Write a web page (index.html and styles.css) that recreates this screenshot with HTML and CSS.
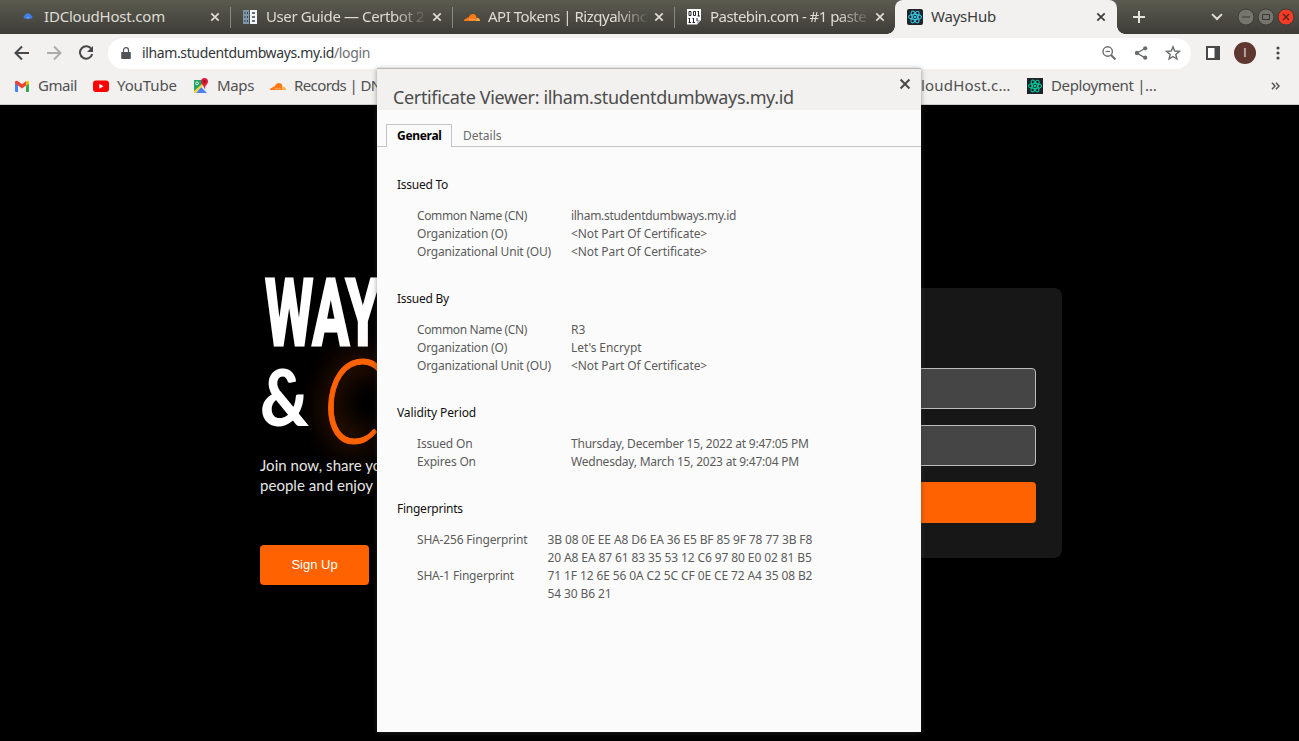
FILE: index.html
```
<!DOCTYPE html>
<html lang="en">
<head>
<meta charset="utf-8">
<title>WaysHub</title>
<link rel="stylesheet" href="styles.css">
</head>
<body>
<svg class="defs" width="0" height="0">
  <symbol id="x" viewBox="0 0 10 10"><path d="M1.3 1.3 8.7 8.7M8.7 1.3 1.3 8.7" fill="none" stroke="currentColor" stroke-width="1.7"/></symbol>
  <symbol id="cloud" viewBox="0 0 16 16"><path d="M0 12c.1-1.400 1-2.200 2.300-2.200.3-.9 1.200-1.400 2.200-1.100C5.300 6.400 7 4.900 8.900 4.900c1.800 0 3.300 1.100 3.500 2.900L12 12z" fill="#ff7a14"/><path d="M11.800 12l.9-3.200c1.900 0 3.200 1.200 3.300 3.200z" fill="#fbad41"/><path d="M5 10.700h6.200" stroke="#fcd9b8" stroke-width=".5"/></symbol>
  <symbol id="atom" viewBox="0 0 16 16"><g fill="none" stroke="currentColor" stroke-width="1.1"><ellipse cx="8" cy="8" rx="6.500" ry="2.500"/><ellipse cx="8" cy="8" rx="6.500" ry="2.500" transform="rotate(60 8 8)"/><ellipse cx="8" cy="8" rx="6.500" ry="2.500" transform="rotate(120 8 8)"/></g><circle cx="8" cy="8" r="1.300" fill="currentColor"/></symbol>
</svg>

<header class="tabs">
  <div class="tab">
    <svg class="ico" viewBox="0 0 16 16"><path d="M4.200 9.500a2 2 0 0 1 .3-3 3.700 3.700 0 0 1 6.700 0 2 2 0 0 1 .6 3z" fill="#3f7fea"/><path d="M6 9.500h4L8 7.500z" fill="#7ba9f5"/><path d="M1 12h14" stroke="#4d5155" stroke-width="1"/></svg>
    <span class="name">IDCloudHost.com</span><svg class="close"><use href="#x"/></svg>
  </div>
  <div class="tab">
    <svg class="ico" viewBox="0 0 16 16"><path d="M1 1h6v14H1z" fill="#7f97a8"/><path d="M8 1h7v14H8z" fill="#f2f4f5"/><path d="M2.500 3h1v2h-1zM2.500 7h1v2h-1zM2.500 11h1v2h-1zM5 3h1v2H5zM5 7h1v2H5zM5 11h1v2H5z" fill="#31475c"/><path d="M10 4h3M10 8h3M10 12h3" stroke="#31475c" stroke-width="1.700"/></svg>
    <span class="name fade guide">User Guide — Certbot 2</span><svg class="close"><use href="#x"/></svg>
  </div>
  <div class="tab">
    <svg class="ico"><use href="#cloud"/></svg>
    <span class="name fade api">API Tokens | Rizqyalvinc</span><svg class="close"><use href="#x"/></svg>
  </div>
  <div class="tab last">
    <svg class="ico" viewBox="0 0 16 16"><path d="M1 0h14v11l-4 4.500H1z" fill="#fff"/><path d="M15 11h-4v4.500z" fill="#aebbd0"/><g fill="none" stroke="#222"><path d="M3 2.500h2v4H3zM7.500 2.500h2v4h-2zM12.500 2v5M11.500 2.500h1M11.500 7h2.500M3.500 9v5M2.500 9.500h1M2.500 13.500H5M7.500 9v5M6.500 9.500h1M6.500 13.500H9M11 9v3"/></g></svg>
    <span class="name fade bin">Pastebin.com - #1 paste</span><svg class="close"><use href="#x"/></svg>
  </div>
  <div class="tab active">
    <svg class="ico react"><use href="#atom"/></svg>
    <span class="name">WaysHub</span><svg class="close"><use href="#x"/></svg>
  </div>
  <svg class="plus" viewBox="0 0 14 14"><path d="M7 1v12M1 7h12" stroke="#e6e4df" stroke-width="2"/></svg>
  <svg class="chev" viewBox="0 0 10 7"><path d="M.7 1 5 5.300 9.300 1" fill="none" stroke="#dfddd6" stroke-width="1.800"/></svg>
  <div class="winbtns">
    <svg viewBox="0 0 18 18"><circle cx="9" cy="9" r="8" fill="#75746d" stroke="#3c3b37"/><path d="M5 9h8" stroke="#393832"/></svg>
    <svg viewBox="0 0 18 18"><circle cx="9" cy="9" r="8" fill="#75746d" stroke="#3c3b37"/><path d="M5.500 6.500h7v5h-7z" fill="none" stroke="#393832"/></svg>
    <svg viewBox="0 0 18 18"><circle cx="9" cy="9" r="8" fill="#f43b25" stroke="#3c3b37"/><path d="M6 6l6 6M12 6l-6 6" stroke="#54221a" stroke-width="1.300"/></svg>
  </div>
</header>

<nav class="toolbar">
  <svg class="tool" viewBox="0 0 16 16"><path d="M15 8H2M8 1.500 1.500 8 8 14.500" fill="none" stroke="#47484a" stroke-width="2"/></svg>
  <svg class="tool" viewBox="0 0 16 16"><path d="M1 8h13M8 1.500 14.500 8 8 14.500" fill="none" stroke="#adacaa" stroke-width="2"/></svg>
  <svg class="tool" viewBox="0 0 16 16"><path d="M13.500 4.300A6.200 6.200 0 1 0 14.200 9" fill="none" stroke="#47484a" stroke-width="2"/><path d="M15 1v6H9z" fill="#47484a"/></svg>
  <div class="omnibox">
    <svg class="lock" viewBox="0 0 10 13"><path d="M1 5h8q.8 0 .8.8v5.400q0 .8-.8.8H1q-.8 0-.8-.8V5.800Q.2 5 1 5z" fill="#505357"/><path d="M2.500 5.500V3.200a2.500 2.500 0 0 1 5 0v2.300" fill="none" stroke="#505357" stroke-width="1.200"/></svg>
    <span class="url">ilham.studentdumbways.my.id<i>/login</i></span>
    <svg class="act" viewBox="0 0 16 16"><circle cx="6.700" cy="6.500" r="4.700" fill="none" stroke="#6a6c6f" stroke-width="1.400"/><path d="M10 10l4.500 4.500" stroke="#6a6c6f" stroke-width="1.900"/><path d="M4.500 6.500H9" stroke="#6a6c6f" stroke-width="1.200"/></svg>
    <svg class="act" viewBox="0 0 16 16"><path d="M12 3.500 4 8l8 4.800" fill="none" stroke="#6a6c6f" stroke-width="1.400"/><g fill="#6a6c6f"><circle cx="12.200" cy="3.300" r="2.100"/><circle cx="4" cy="8" r="2.200"/><circle cx="12.200" cy="12.700" r="2.100"/></g></svg>
    <svg class="act" viewBox="0 0 16 16"><path d="M8 1.800 9.700 6l4.700.4-3.600 3 1.100 4.600L8 11.500 4.100 14l1.100-4.600-3.600-3L6.300 6z" fill="none" stroke="#6a6c6f" stroke-width="1.400"/></svg>
  </div>
  <svg class="panel" viewBox="0 0 14 14"><path d="M1 1h12v12H1z" fill="#fff" stroke="#47484a" stroke-width="2"/><path d="M8.500 1H13v12H8.500z" fill="#47484a"/></svg>
  <span class="avatar">I</span>
  <svg class="dots" viewBox="0 0 4 14"><g fill="#47484a"><circle cx="2" cy="2" r="1.600"/><circle cx="2" cy="7" r="1.600"/><circle cx="2" cy="12" r="1.600"/></g></svg>
</nav>

<nav class="bookmarks">
  <div class="bm gmail"><svg class="ico" viewBox="0 0 16 16"><path d="M1 4h3v10H2q-1 0-1-1z" fill="#4285f4"/><path d="M12 4h3v9q0 1-1 1h-2z" fill="#34a853"/><path d="M1 3.500Q2.500 1.800 4.500 3.500L8 6.300l4-3v4.200L8 10.500 4 7.500 1 5.500z" fill="#ea4335"/><path d="M12 3.300q2-1.300 3 .5v2l-3 2z" fill="#fbbc04"/></svg><span>Gmail</span></div>
  <div class="bm youtube"><svg class="ico" viewBox="0 0 16 16"><rect y="2.500" width="16" height="11.500" rx="3" fill="#f00"/><path d="M6.300 5.800v5L10.500 8.300z" fill="#fff"/></svg><span>YouTube</span></div>
  <div class="bm maps"><svg class="ico" viewBox="0 0 16 16"><path d="M1 2h13v13H1z" fill="#e8eaed"/><path d="M1 2h9L1 12z" fill="#1fa463"/><path d="M3 15l5-6 6 6z" fill="#4c83ee"/><path d="M1 12 11 2l2 2L2.500 15H1z" fill="#fdd231"/><path d="M1 2h8v4L1 13z" fill="#1fa463"/><circle cx="4" cy="5.300" r="1.400" fill="none" stroke="#fff" stroke-width=".8"/><path d="M11.500 0a3.500 3.500 0 0 1 3.500 3.500c0 2.500-2.900 3.500-3.200 7h-.6C11 7 8 6 8 3.500A3.500 3.500 0 0 1 11.500 0z" fill="#e31b3c"/><circle cx="11.500" cy="3.500" r="1.200" fill="#8b0d24"/></svg><span>Maps</span></div>
  <div class="bm records"><svg class="ico"><use href="#cloud"/></svg><span>Records | DN</span></div>
  <div class="bm idc"><span>loudHost.c…</span></div>
  <div class="bm deploy"><svg class="ico react green"><use href="#atom"/></svg><span>Deployment |…</span></div>
  <svg class="more" viewBox="0 0 9 8"><path d="M1 .7 4 4 1 7.300M5 .7 8 4 5 7.300" fill="none" stroke="#55565a" stroke-width="1.500"/></svg>
</nav>

<main class="page">
  <section class="hero">
    <h1><span class="ways">WAY</span><span class="second"><span class="amp">&amp;</span><span class="cee">C</span></span></h1>
    <p>Join now, share yo<br>people and enjoy</p>
    <button class="signup">Sign Up</button>
  </section>
  <form class="card">
    <div class="field"></div>
    <div class="field"></div>
    <div class="submit"></div>
  </form>
</main>

<div class="dialog">
  <div class="dhead"><h2>Certificate Viewer: ilham.studentdumbways.my.id</h2><svg class="dclose"><use href="#x"/></svg></div>
  <div class="dtabs"><span class="dtab on">General</span><span class="dtab off">Details</span></div>
  <div class="dbody">
    <h3>Issued To</h3>
    <dl>
      <dt class="cn">Common Name (CN)</dt><dd class="host">ilham.studentdumbways.my.id</dd>
      <dt>Organization (O)</dt><dd>&lt;Not Part Of Certificate&gt;</dd>
      <dt>Organizational Unit (OU)</dt><dd>&lt;Not Part Of Certificate&gt;</dd>
    </dl>
    <h3>Issued By</h3>
    <dl>
      <dt class="cn">Common Name (CN)</dt><dd>R3</dd>
      <dt>Organization (O)</dt><dd>Let's Encrypt</dd>
      <dt>Organizational Unit (OU)</dt><dd>&lt;Not Part Of Certificate&gt;</dd>
    </dl>
    <h3 class="wide">Validity Period</h3>
    <dl>
      <dt>Issued On</dt><dd class="date">Thursday, December 15, 2022 at 9:47:05 PM</dd>
      <dt>Expires On</dt><dd class="date">Wednesday, March 15, 2023 at 9:47:04 PM</dd>
    </dl>
    <h3>Fingerprints</h3>
    <dl class="prints">
      <dt>SHA-256 Fingerprint</dt><dd>3B 08 0E EE A8 D6 EA 36 E5 BF 85 9F 78 77 3B F8<br>20 A8 EA 87 61 83 35 53 12 C6 97 80 E0 02 81 B5</dd>
      <dt>SHA-1 Fingerprint</dt><dd>71 1F 12 6E 56 0A C2 5C CF 0E CE 72 A4 35 08 B2<br>54 30 B6 21</dd>
    </dl>
  </div>
</div>
</body>
</html>
```
FILE: styles.css
```
* { box-sizing: border-box; }
body { margin: 0; width: 1299px; height: 741px; overflow: hidden; background: #000; font-family: "Noto Sans", sans-serif; display: flex; flex-direction: column; position: relative; }
h1, h2, h3, p, dl, dd { margin: 0; font-weight: 400; }
svg { display: block; flex: none; }
.defs { position: absolute; }
.ico { width: 16px; height: 16px; }

.tabs { height: 34px; flex: none; display: flex; align-items: center; padding-left: 9px; background: linear-gradient(#5c5b4f, #3d3c38); }
.tab { width: 222px; height: 34px; flex: none; display: flex; align-items: center; padding: 0 11px; color: #dfdcd5; font-size: 15px; position: relative; }
.tab:not(.last):not(.active)::after { content: ""; position: absolute; right: 0; top: 7px; width: 1px; height: 21px; background: #8a8980; }
.name { margin-left: 8px; width: 160px; padding-bottom: 2px; white-space: nowrap; letter-spacing: -.2px; line-height: 20px; }
.guide { letter-spacing: -.4px; }
.api { letter-spacing: -.5px; }
.bin { letter-spacing: -.55px; }
.fade { -webkit-mask-image: linear-gradient(90deg, #000 128px, transparent 162px); mask-image: linear-gradient(90deg, #000 128px, transparent 162px); }
.close { width: 10px; height: 10px; margin-left: 6px; }
.active { margin-left: -2px; padding-left: 12px; background: #f2f1f0; color: #3c3c3c; border-radius: 8px 8px 0 0; }
.active::before, .active::after { content: ""; position: absolute; bottom: 0; width: 8px; height: 8px; }
.active::before { left: -8px; background: radial-gradient(circle at 0 0, transparent 7.5px, #f2f1f0 8px); }
.active::after { right: -8px; background: radial-gradient(circle at 100% 0, transparent 7.5px, #f2f1f0 8px); }
.active .close { margin-left: 5px; }
.last .close { margin-left: 5px; }
.react { background: #20232a; color: #35c3dc; border-radius: 2px; }
.green { color: #00c896; border-radius: 0; }
.plus { width: 14px; height: 14px; margin-left: 15px; }
.chev { width: 12px; height: 8px; margin-left: 65px; }
.winbtns { display: flex; gap: 2px; margin-left: 14px; }
.winbtns svg { width: 18px; height: 18px; }

.toolbar { height: 35px; flex: none; background: #f2f1f0; display: flex; align-items: center; padding: 3px 0 0 14px; }
.tool { width: 16px; height: 16px; margin-right: 16px; }
.omnibox { width: 1083px; height: 31px; margin-left: -2px; border-radius: 16px; background: #fff; display: flex; align-items: center; padding: 0 10px 0 13px; }
.lock { width: 10px; height: 13px; }
.url { flex: 1; margin-left: 11px; font-size: 14px; letter-spacing: -.37px; color: #333537; line-height: 20px; }
.url i { font-style: normal; color: #6d7074; }
.act { width: 16px; height: 16px; margin-left: 16px; }
.act:nth-of-type(2) { margin-left: 0; }
.panel { width: 14px; height: 14px; margin-left: 15px; }
.avatar { width: 22px; height: 22px; border-radius: 50%; margin-left: 14px; background: #5d3730; color: #e4dcda; font: 12px/22px "Liberation Sans", sans-serif; text-align: center; }
.dots { width: 4px; height: 14px; margin-left: 20px; }

.bookmarks { height: 36px; flex: none; background: #f2f1f0; border-bottom: 1px solid #c9c9c8; display: flex; align-items: center; padding: 0 0 2px 14px; color: #505050; font-size: 15px; }
.bm { display: flex; align-items: center; gap: 8px; white-space: nowrap; line-height: 20px; }
.bm span { padding-bottom: 1px; }
.gmail { width: 79px; letter-spacing: -.45px; }
.youtube { width: 100px; letter-spacing: -.1px; }
.maps { width: 77px; letter-spacing: -.35px; }
.records { width: 651px; letter-spacing: -.6px; }
.idc { width: 106px; letter-spacing: .2px; }
.deploy { width: 244px; letter-spacing: -.35px; }
.more { width: 9px; height: 8px; }

.page { flex: 1; display: flex; align-items: flex-start; padding-left: 260px; }
.hero { width: 340px; padding-top: 167px; color: #fff; }
h1 { height: 183px; line-height: 1; }
h1 span { display: block; white-space: nowrap; }
h1 .ways { height: 82px; font: 700 92px/84px Roboto, sans-serif; transform: scaleX(.6); transform-origin: 0 0; margin-left: 5px; width: 200px; -webkit-text-stroke: 3px #fff; }
h1 .second { display: flex; height: 90px; }
.amp { width: 62px; font: 900 79px/84px Lato, sans-serif; transform: scaleX(.85); transform-origin: 0 0; }
.cee { font: italic 300 117px/88px Lato, sans-serif; color: #ff6200; text-shadow: 0 0 28px rgba(255, 98, 0, .7); -webkit-text-stroke: 1px #ff6200; transform: scaleX(.8); transform-origin: 0 50%; margin-left: 1px; }
.hero p { font: 15px/20px Lato, sans-serif; letter-spacing: .03px; white-space: nowrap; color: #e6e6e6; }
.signup { display: block; width: 109px; height: 40px; margin-top: 50px; padding: 0 0 1px; border: 0; border-radius: 4px; background: #ff6200; color: #fff; font: 13px "Liberation Sans", sans-serif; }
.card { width: 462px; height: 270px; margin-top: 183px; padding: 80px 26px 0; border-radius: 8px; background: #171717; display: flex; flex-direction: column; gap: 16px; }
.field { height: 41px; border: 1px solid #bcbcbc; border-radius: 4px; background: #454545; }
.submit { height: 41px; border-radius: 4px; background: #ff6200; }

.dialog { position: absolute; left: 377px; top: 68px; width: 544px; height: 664px; border-top: 1px solid #b9b8b7; background: #fbfbfb; box-shadow: 0 1px 5px rgba(60, 60, 60, .5); color: #5b5b5b; font-size: 12px; }
.dhead { height: 41px; background: #f2f1f0; display: flex; justify-content: space-between; padding: 10px 10px 0 16px; }
h2 { font-size: 18px; line-height: 36px; letter-spacing: -.35px; color: #4c4c4c; white-space: nowrap; }
.dclose { width: 12px; height: 12px; margin-top: -1px; color: #4a4a4a; }
.dtabs { height: 37px; display: flex; align-items: flex-end; padding-left: 9px; border-bottom: 1px solid #c4c4c4; }
.dtab { height: 23px; line-height: 22px; padding: 0 10px; }
.on { width: 66px; margin-bottom: -1px; border: 1px solid #c4c4c4; border-bottom: 0; background: #fbfbfb; color: #000; font-weight: 700; letter-spacing: -.3px; }
.off { padding-left: 11px; height: 22px; line-height: 24px; color: #6a6a6a; }
.dbody { padding: 28px 20px 0; }
h3 { font-size: 12px; line-height: 20px; color: #111; letter-spacing: -.25px; }
.wide { letter-spacing: -.1px; }
dl { display: grid; grid-template-columns: 154px 1fr; margin: 12px 0 28px 20px; line-height: 18px; }
.prints { grid-template-columns: 130.5px 1fr; }
dt { letter-spacing: -.18px; }
dd { letter-spacing: -.08px; }
.cn { letter-spacing: -.37px; }
.host { letter-spacing: -.3px; }
.date { letter-spacing: -.22px; }
.prints dd { letter-spacing: -.11px; }
```
